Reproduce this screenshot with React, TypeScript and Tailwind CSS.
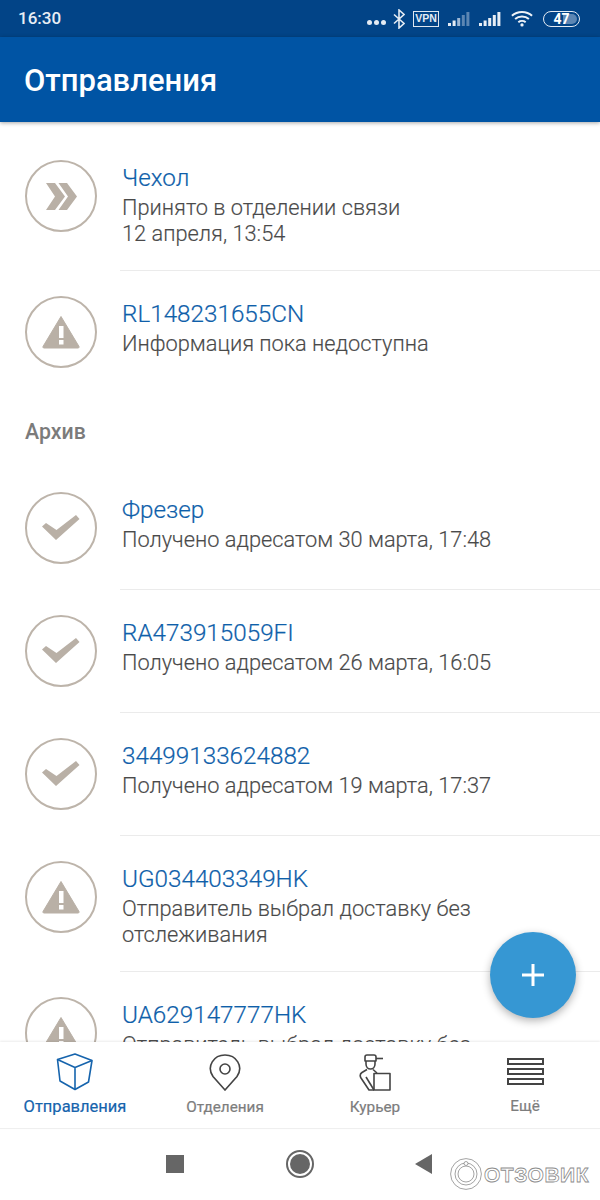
const Circle = ({ children }: { children: React.ReactNode }) => (
  <div className="w-[72px] h-[72px] rounded-full border-[2.5px] border-[#bdb4aa] flex items-center justify-center">
    {children}
  </div>
);

const Arrows = () => (
  <svg width="31" height="27" viewBox="0 0 31 27" fill="#b9b0a6">
    <path d="M0 0h9l10 13.5L9 27H0l9-13.5z" />
    <path d="M12.5 0h8.5l10 13.5L21 27h-8.5l9.5-13.5z" />
  </svg>
);

const Warning = () => (
  <svg width="38" height="34" viewBox="0 0 38 34">
    <path d="M19 1.5L37 31.5a1 1 0 0 1-.9 1.5H1.9a1 1 0 0 1-.9-1.5z" fill="#b9b0a6" stroke="#b9b0a6" strokeLinejoin="round" />
    <rect x="17" y="11" width="4.5" height="12" fill="#fff" />
    <rect x="17" y="25" width="4.5" height="4.5" fill="#fff" />
  </svg>
);

const Check = () => (
  <svg width="38" height="26" viewBox="0 0 38 26" fill="#b9b0a6">
    <path d="M0 11.5l4-3.5 10.5 7L34 0l3.5 4L14 25z" />
  </svg>
);

const rows1 = [
  { icon: "arrows", title: "Чехол", sub: ["Принято в отделении связи", "12 апреля, 13:54"], border: true },
  { icon: "warn", title: "RL148231655CN", sub: ["Информация пока недоступна"], border: false },
];

const rows2 = [
  { icon: "check", title: "Фрезер", sub: ["Получено адресатом 30 марта, 17:48"], border: true },
  { icon: "check", title: "RA473915059FI", sub: ["Получено адресатом 26 марта, 16:05"], border: true },
  { icon: "check", title: "34499133624882", sub: ["Получено адресатом 19 марта, 17:37"], border: true },
  { icon: "warn", title: "UG034403349HK", sub: ["Отправитель выбрал доставку без", "отслеживания"], border: true },
  { icon: "warn", title: "UA629147777HK", sub: ["Отправитель выбрал доставку без", "отслеживания"], border: false },
];

type RowData = { icon: string; title: string; sub: string[]; border: boolean };

const Row = ({ row }: { row: RowData }) => (
  <div className="flex">
    <div className="w-[120px] shrink-0 pl-[25px] pt-[25px]">
      <Circle>
        {row.icon === "arrows" && <Arrows />}
        {row.icon === "warn" && <Warning />}
        {row.icon === "check" && <Check />}
      </Circle>
    </div>
    <div className={`flex-1 min-h-[123px] pt-[26px] pb-[23px] pl-[2px] ${row.border ? "border-b border-[#ebebeb]" : ""}`}>
      <div className="text-[24.25px] leading-[32px] translate-y-[0.5px] text-[#0f5faa] font-light [-webkit-text-stroke:0.2px_#0f5faa]">{row.title}</div>
      <div className="mt-[2px] text-[21.8px] leading-[26px] text-[#4a4a4a] font-light [-webkit-text-stroke:0.15px_#4a4a4a]">
        {row.sub.map((s) => (
          <div key={s}>{s}</div>
        ))}
      </div>
    </div>
  </div>
);

const StatusIcons = () => (
  <div className="flex items-center text-white">
    <div className="flex gap-[2px] mt-[8px]">
      <span className="w-[5px] h-[5px] rounded-full bg-[#e4ebf3]" />
      <span className="w-[5px] h-[5px] rounded-full bg-[#e4ebf3]" />
      <span className="w-[5px] h-[5px] rounded-full bg-[#e4ebf3]" />
    </div>
    <svg width="12" height="20" viewBox="0 0 12 20" fill="none" stroke="#e4ebf3" strokeWidth="1.6" className="ml-[7px]">
      <path d="M1 5.5l10 9L6 19V1l5 4.5-10 9" />
    </svg>
    <div className="ml-[8px] w-[26px] h-[16px] border border-[#dfe7f0] flex items-center justify-center text-[10.5px] font-bold text-[#e4ebf3] [font-family:'Liberation_Sans',sans-serif]">
      VPN
    </div>
    <svg width="22" height="16" viewBox="0 0 22 16" className="ml-[9px]">
      <rect x="0" y="12" width="3" height="3" fill="#e4ebf3" />
      <rect x="4.6" y="9.5" width="3" height="5.5" fill="#e4ebf3" />
      <rect x="9.2" y="7" width="3" height="8" fill="#9db8d6" />
      <rect x="13.8" y="4" width="3" height="11" fill="#5c86b3" />
      <rect x="18.4" y="1" width="3" height="14" fill="#5c86b3" />
    </svg>
    <svg width="22" height="16" viewBox="0 0 22 16" className="ml-[9px]" fill="#e8eef5">
      <rect x="0" y="12" width="3" height="3" />
      <rect x="4.6" y="9.5" width="3" height="5.5" />
      <rect x="9.2" y="7" width="3" height="8" />
      <rect x="13.8" y="4" width="3" height="11" />
      <rect x="18.4" y="1" width="3" height="14" />
    </svg>
    <svg width="22" height="18" viewBox="0 0 24 18" fill="none" stroke="#eef3f8" strokeWidth="2.2" className="ml-[10px]">
      <path d="M1 5.5c6-5.5 16-5.5 22 0" />
      <path d="M4.5 9c4-3.5 11-3.5 15 0" />
      <path d="M8 12.5c2.2-1.8 5.8-1.8 8 0" />
      <circle cx="12" cy="15.5" r="1.8" fill="#eef3f8" stroke="none" />
    </svg>
    <div className="relative ml-[10px] w-[37px] h-[16px] rounded-full border border-[#e4ebf3] overflow-hidden flex items-center justify-center">
      <div className="absolute right-[2px] top-[2px] bottom-[2px] w-[14px] rounded-r-full bg-[#5c86b3]" />
      <span className="relative text-[14px] font-bold text-white leading-none">47</span>
    </div>
  </div>
);

const Watermark = () => (
  <div className="absolute left-[450px] top-[1158px] flex items-center">
    <svg width="32" height="32" viewBox="0 0 32 32" fill="none" stroke="#8c8c8c" strokeWidth="0.8">
      <circle cx="16" cy="16" r="15.4" />
      <circle cx="16" cy="16" r="11" />
      <circle cx="16" cy="16" r="8" />
      <circle cx="16" cy="5.5" r="2" fill="#fff" />
    </svg>
    <span className="ml-[2px] text-[21px] leading-none font-bold tracking-[0.5px] text-white [-webkit-text-stroke:0.8px_#8c8c8c] [font-family:'Liberation_Sans',sans-serif]">
      ОТЗОВИК
    </span>
  </div>
);

export default function App() {
  return (
    <div className="relative w-[600px] h-[1200px] flex flex-col overflow-hidden bg-white font-['Roboto',sans-serif]">
      <div className="h-[37px] shrink-0 bg-[#024487] flex items-center justify-between pl-[18px] pr-[20px]">
        <span className="text-[17px] font-medium text-[#e8eef5]">16:30</span>
        <StatusIcons />
      </div>
      <div className="h-[85px] shrink-0 bg-[#0054a4] flex items-center pl-[24px] relative z-10 shadow-[0_1px_4px_rgba(0,0,0,0.35)]">
        <h1 className="text-[31px] leading-[36px] mt-[3px] font-medium text-white">Отправления</h1>
      </div>

      <main className="relative flex-1 overflow-hidden">
        <div className="pt-[13px]">
          {rows1.map((r) => (
            <Row key={r.title} row={r} />
          ))}
          <div className="h-[73px] pl-[25px] pt-[23px] text-[21.3px] leading-[30px] font-medium text-[#7b7b7b]">Архив</div>
          {rows2.map((r) => (
            <Row key={r.title} row={r} />
          ))}
        </div>
        <button className="absolute right-[24px] bottom-[24px] w-[86px] h-[86px] rounded-full bg-[#3697d3] flex items-center justify-center shadow-[0_3px_8px_rgba(0,0,0,0.3)]">
          <svg width="22" height="22" viewBox="0 0 22 22" fill="#fff">
            <rect x="9.5" y="0" width="3" height="22" />
            <rect x="0" y="9.5" width="22" height="3" />
          </svg>
        </button>
      </main>

      <nav className="h-[87px] shrink-0 grid grid-cols-4 bg-white border-b border-[#efefef] shadow-[0_-1px_2px_rgba(0,0,0,0.08)] relative z-10">
        <div className="flex flex-col items-center pt-[11px]">
          <svg width="38" height="38" viewBox="0 0 38 38" fill="none" stroke="#1664ad" strokeWidth="1.6" strokeLinejoin="round">
            <path d="M19 1L36 7.5 32.5 29 19 36.5 4 28 1.5 6.5z" />
            <path d="M1.5 6.5L19 14.5 36 7.5M19 14.5v22" />
          </svg>
          <span className="mt-[6px] text-[16.5px] leading-[20px] text-[#1664ad] [-webkit-text-stroke:0.2px_#1664ad]">Отправления</span>
        </div>
        <div className="flex flex-col items-center pt-[12px]">
          <svg width="32" height="37" viewBox="0 0 32 37" fill="none" stroke="#444" strokeWidth="1.6">
            <path d="M16 36L4 22.5C-3 12 5 1 16 1s19 11 12 21.5z" />
            <circle cx="16" cy="15" r="5" />
          </svg>
          <span className="mt-[6px] text-[15.3px] leading-[20px] text-[#7d7d7d] [-webkit-text-stroke:0.2px_#7d7d7d]">Отделения</span>
        </div>
        <div className="flex flex-col items-center pt-[12px]">
          <svg width="32" height="37" viewBox="0 0 32 37" fill="none" stroke="#444" strokeWidth="1.6" strokeLinejoin="round">
            <path d="M6 7V3q0-2 2-2h7q2 0 2 2v4H6z" />
            <path d="M17 4.5h7" />
            <path d="M7 7v3c0 3 2 5 4.5 5s4.5-2 4.5-5V7" />
            <path d="M8 15.5L3 18.5Q0 20.5 2 24L10 36H15" />
            <path d="M14 15.5L18 19" />
            <path d="M15 36L7 23" />
            <rect x="15" y="19.5" width="16" height="16.5" />
          </svg>
          <span className="mt-[6px] text-[15.3px] leading-[20px] text-[#7d7d7d] [-webkit-text-stroke:0.2px_#7d7d7d]">Курьер</span>
        </div>
        <div className="flex flex-col items-center pt-[16px]">
          <div className="w-[37px] flex flex-col gap-[3px]">
            <div className="h-[7px] border-2 border-[#444]" />
            <div className="h-[7px] border-2 border-[#444]" />
            <div className="h-[7px] border-2 border-[#444]" />
          </div>
          <span className="mt-[11px] text-[15.3px] leading-[20px] text-[#7d7d7d] [-webkit-text-stroke:0.2px_#7d7d7d]">Ещё</span>
        </div>
      </nav>

      <div className="h-[71px] shrink-0 bg-white self-center w-[375px] grid grid-cols-3 items-center pb-[1px]">
        <div className="justify-self-center w-[18px] h-[18px] bg-[#666]" />
        <div className="justify-self-center w-[28px] h-[28px] rounded-full border-2 border-[#666] flex items-center justify-center">
          <div className="w-[20px] h-[20px] rounded-full bg-[#666]" />
        </div>
        <div className="justify-self-center mr-[4px] w-0 h-0 border-y-[10px] border-y-transparent border-r-[17px] border-r-[#666]" />
      </div>
      <Watermark />
    </div>
  );
}
